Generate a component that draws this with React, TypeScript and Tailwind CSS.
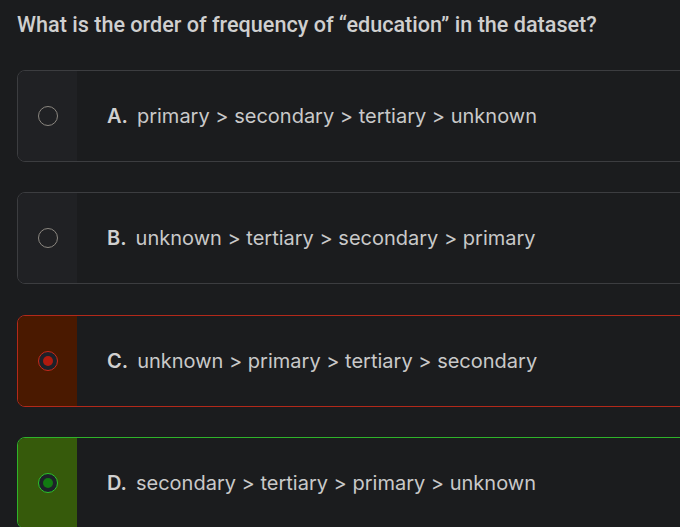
import React from "react";

type Option = {
  letter: string;
  text: string;
  state: "none" | "wrong" | "right";
};

const options: Option[] = [
  { letter: "A.", text: "primary > secondary > tertiary > unknown", state: "none" },
  { letter: "B.", text: "unknown > tertiary > secondary > primary", state: "none" },
  { letter: "C.", text: "unknown > primary > tertiary > secondary", state: "wrong" },
  { letter: "D.", text: "secondary > tertiary > primary > unknown", state: "right" },
];

function Radio({ state }: { state: Option["state"] }) {
  if (state === "none") {
    return <div className="h-[20px] w-[20px] rounded-full border-[1.5px] border-[#8b8780]" />;
  }
  const ring = state === "wrong" ? "border-[#c8281a]" : "border-[#2bc22b]";
  const dot = state === "wrong" ? "bg-[#b01a0e]" : "bg-[#127a12]";
  return (
    <div className={`flex h-[20px] w-[20px] items-center justify-center rounded-full border-[1.5px] bg-[#1d2129] ${ring}`}>
      <div className={`h-[10px] w-[10px] rounded-full ${dot}`} />
    </div>
  );
}

export default function App() {
  return (
    <div
      className="h-[527px] w-[680px] overflow-hidden bg-[#1b1c1e] pl-[17px] pt-[10px]"
      style={{ fontFamily: "Inter, 'Noto Sans', sans-serif" }}
    >
      <h1
        className="text-[21.6px] font-medium leading-[30px] text-[#cfcfcf]"
        style={{ fontFamily: "Roboto, 'Liberation Sans', sans-serif" }}
      >
        What is the order of frequency of “education” in the dataset?
      </h1>

      <div className="mt-[30px] flex flex-col gap-[30.3px]">
        {options.map((o) => {
          const border =
            o.state === "wrong"
              ? "border-[#b3291a]"
              : o.state === "right"
              ? "border-[#2fb32a]"
              : "border-[#3c3d40]";
          const side =
            o.state === "wrong"
              ? "bg-[#4a1900]"
              : o.state === "right"
              ? "bg-[#365a0b]"
              : "bg-[#202124]";
          return (
            <div
              key={o.letter}
              className={`flex h-[92px] w-[720px] shrink-0 overflow-hidden rounded-[8px] border ${border} bg-[#1b1c1e]`}
            >
              <div className={`flex w-[59px] shrink-0 items-center justify-center ${side}`}>
                <Radio state={o.state} />
              </div>
              <div className="flex items-center pl-[30px] text-[20px] text-[#c9c9c9]">
                <span className="mr-[9px] font-semibold text-[#d0d0d0]">{o.letter}</span>
                <span>{o.text}</span>
              </div>
            </div>
          );
        })}
      </div>
    </div>
  );
}
